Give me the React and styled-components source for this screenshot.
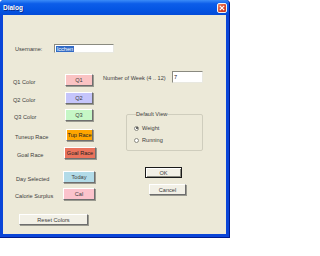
import React from "react";
import styled, { createGlobalStyle } from "styled-components";

const Global = createGlobalStyle`
  html, body {
    margin: 0;
    background: #ffffff;
  }
  body {
    font-family: "Liberation Sans", Arial, sans-serif;
  }
`;

const Window = styled.div`
  display: flex;
  flex-direction: column;
  width: 230px;
  height: 238px;
  box-sizing: border-box;
  padding: 0 3px 3px 3px;
  background: #0a45d8;
  border-right: 1px solid #001a8c;
  border-bottom: 1px solid #001a8c;
  border-radius: 4px 4px 0 0;
`;

const TitleBar = styled.div`
  display: flex;
  align-items: center;
  justify-content: space-between;
  height: 15px;
  margin: 0 -3px;
  padding: 0 2px 0 3px;
  border-radius: 4px 4px 0 0;
  background: linear-gradient(
    to bottom,
    #3b8cf8 0%,
    #0c5de9 25%,
    #0556e4 60%,
    #044bd8 100%
  );
`;

const Title = styled.span`
  color: #ffffff;
  font-size: 6.5px;
  font-weight: bold;
  text-shadow: 1px 1px 0 #0a2a8a;
`;

const CloseButton = styled.div`
  display: flex;
  align-items: center;
  justify-content: center;
  width: 10px;
  height: 10px;
  box-sizing: border-box;
  border: 1px solid #f4f4f4;
  border-radius: 2px;
  background: linear-gradient(135deg, #ee8a6a 0%, #d9472a 55%, #c23a1e 100%);

  svg {
    width: 6px;
    height: 6px;
  }
`;

const Body = styled.div`
  flex: 1;
  display: flex;
  flex-direction: column;
  padding-top: 29px;
  background: #ece9d8;
`;

const UserRow = styled.div`
  display: flex;
  align-items: center;
  height: 9px;
`;

const Label = styled.span`
  display: block;
  color: #3c3c3c;
  font-size: 5.6px;
  white-space: nowrap;
  padding-left: ${(p) => p.$indent || 0}px;
  margin-top: ${(p) => p.$drop || 0}px;
`;

const UserLabel = styled(Label)`
  width: 39px;
`;

const Field = styled.div`
  display: flex;
  align-items: center;
  box-sizing: border-box;
  width: ${(p) => p.$w}px;
  height: ${(p) => p.$h}px;
  padding-left: 1px;
  background: #ffffff;
  border: 1px solid;
  border-color: #8a8a80 #e8e8e0 #e8e8e0 #8a8a80;
  font-size: 5.6px;
  color: #1a1a1a;
`;

const Selected = styled.span`
  background: #316ac5;
  color: #ffffff;
  padding: 0 1px;
  line-height: 6px;
`;

const Section = styled.div`
  display: flex;
  margin-top: 18px;
`;

const LeftColumn = styled.div`
  display: flex;
  flex-direction: column;
  width: 100px;
  padding-top: 3px;
`;

const ColorRow = styled.div`
  display: grid;
  grid-template-columns: 60px 40px;
  align-items: center;
  height: 12px;
  margin-top: ${(p) => p.$gap || 0}px;
`;

const Button = styled.div`
  display: flex;
  align-items: center;
  justify-content: center;
  box-sizing: border-box;
  width: ${(p) => p.$w}px;
  height: ${(p) => p.$h || 12}px;
  margin-left: ${(p) => p.$shift || 0}px;
  margin-top: ${(p) => p.$top || 0}px;
  background: ${(p) => p.$bg || "#f2f0e6"};
  border: 1px solid;
  border-color: #ffffff #6e6e6e #6e6e6e #ffffff;
  box-shadow: 1px 1px 0 #9a9a90;
  color: ${(p) => p.$fg || "#3c3c3c"};
  font-size: 5.6px;
  white-space: nowrap;
`;

const DefaultButton = styled(Button)`
  border: 1px solid #1a1a1a;
  box-shadow: inset 1px 1px 0 #ffffff, inset -1px -1px 0 #8a8a80;
`;

const RightColumn = styled.div`
  display: flex;
  flex-direction: column;
`;

const WeekRow = styled.div`
  display: flex;
  align-items: center;
  height: 12px;
`;

const WeekLabel = styled(Label)`
  width: 69px;
  margin-top: 1px;
`;

const Group = styled.fieldset`
  display: flex;
  flex-direction: column;
  gap: 6px;
  width: 77px;
  height: 40px;
  box-sizing: border-box;
  margin: 28px 0 0 23px;
  padding: 8px 0 0 7px;
  border: 1px solid #cfcdbd;
  border-radius: 2px;
`;

const Legend = styled.legend`
  padding: 0;
  margin-left: 2px;
  font-size: 5.6px;
  color: #3c3c3c;
  line-height: 6px;
`;

const RadioRow = styled.div`
  display: flex;
  align-items: center;
  gap: 3px;
  font-size: 5.6px;
  color: #3c3c3c;
`;

const Radio = styled.span`
  display: flex;
  align-items: center;
  justify-content: center;
  width: 5px;
  height: 5px;
  box-sizing: border-box;
  border-radius: 50%;
  border: 1px solid #8a8a80;
  background: #ffffff;

  &::after {
    content: "";
    width: 2px;
    height: 2px;
    border-radius: 50%;
    background: ${(p) => (p.$on ? "#3a3a3a" : "transparent")};
  }
`;

const colors = [
  { label: "Q1 Color", text: "Q1", bg: "#fac3c3", indent: 10, shift: 2, w: 28, gap: 0 },
  { label: "Q2 Color", text: "Q2", bg: "#c5c5fb", indent: 10, shift: 2, w: 28, gap: 6 },
  { label: "Q3 Color", text: "Q3", bg: "#c6f7c6", indent: 11, shift: 2, w: 28, gap: 5 },
  { label: "Tuneup Race", text: "Tup Race", bg: "#ffa500", indent: 12, shift: 3, w: 27, gap: 8, fg: "#222" },
  { label: "Goal Race", text: "Goal Race", bg: "#ea735c", indent: 14, shift: 1, w: 32, gap: 6, fg: "#222" },
  { label: "Day Selected", text: "Today", bg: "#b2dbe8", indent: 13, shift: 0, w: 32, gap: 12 },
  { label: "Calorie Surplus", text: "Cal", bg: "#fbc3cc", indent: 12, shift: 0, w: 32, gap: 5 },
];

export default function App() {
  return (
    <>
      <Global />
      <Window>
        <TitleBar>
          <Title>Dialog</Title>
          <CloseButton>
            <svg viewBox="0 0 6 6">
              <path d="M0.8 0.8 L5.2 5.2 M5.2 0.8 L0.8 5.2" stroke="#ffffff" strokeWidth="1.2" />
            </svg>
          </CloseButton>
        </TitleBar>
        <Body>
          <UserRow>
            <UserLabel $indent={12}>Username:</UserLabel>
            <Field $w={60} $h={9}>
              <Selected>lcchen</Selected>
            </Field>
          </UserRow>
          <Section>
            <LeftColumn>
              {colors.map((c) => (
                <ColorRow key={c.label} $gap={c.gap}>
                  <Label $indent={c.indent} $drop={3}>
                    {c.label}
                  </Label>
                  <Button $w={c.w} $shift={c.shift} $bg={c.bg} $fg={c.fg}>
                    {c.text}
                  </Button>
                </ColorRow>
              ))}
              <Button $w={69} $h={11} $shift={16} $top={14}>
                Reset Colors
              </Button>
            </LeftColumn>
            <RightColumn>
              <WeekRow>
                <WeekLabel>Number of Week (4 .. 12)</WeekLabel>
                <Field $w={31} $h={12}>
                  7
                </Field>
              </WeekRow>
              <Group>
                <Legend>Default View</Legend>
                <RadioRow>
                  <Radio $on />
                  Weight
                </RadioRow>
                <RadioRow>
                  <Radio />
                  Running
                </RadioRow>
              </Group>
              <DefaultButton $w={37} $h={11} $shift={42} $top={16}>
                OK
              </DefaultButton>
              <Button $w={37} $h={11} $shift={46} $top={6}>
                Cancel
              </Button>
            </RightColumn>
          </Section>
        </Body>
      </Window>
    </>
  );
}
